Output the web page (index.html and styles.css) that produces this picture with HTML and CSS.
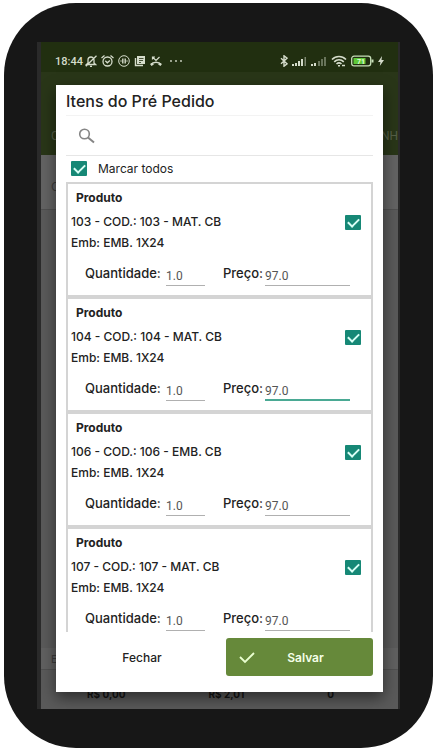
FILE: index.html
```
<!DOCTYPE html>
<html lang="pt-BR">
<head>
    <meta charset="UTF-8">
    <meta name="viewport" content="width=device-width, initial-scale=1.0">
    <title>Itens do Pré Pedido</title>
    <link rel="stylesheet" href="styles.css">
</head>
<body>
    <div class="phone">
        <div class="screen">
            <div class="status-bar">
                <span class="clock">18:44</span>
                <div class="status-left">
                    <svg width="12" height="12" viewBox="0 0 12 12" fill="none" stroke="currentColor" stroke-width="1.300"><path d="M1.500 9.500h9L9 8V5a3 3 0 0 0-6 0v3zM5 11.300h2M11.500.8.8 11.200"/></svg>
                    <svg width="13" height="12" viewBox="0 0 13 12" fill="none" stroke="currentColor" stroke-width="1.300"><circle cx="6.500" cy="6.500" r="4.500"/><path d="M.5 3 3.500.6M12.500 3 9.500.6M4.300 5.800l2 2L8.900 5.500"/></svg>
                    <svg width="12" height="12" viewBox="0 0 12 12" fill="none" stroke="currentColor"><circle cx="6" cy="6" r="5.300"/><path d="M4.800 3.500v5M7.200 3.500v5" stroke-width="1.400"/><path d="M3 5v2M9 5v2" stroke-width=".7"/></svg>
                    <svg width="12" height="12" viewBox="0 0 12 12"><path d="M3 1h8v8H3z" fill="currentColor"/><path d="M1.500 3v7.500H9" fill="none" stroke="currentColor" stroke-width="1.400"/><path d="M5 3.500h4.500M5 5.500h4M5 7.500h2" stroke="#212f10" stroke-width=".8"/></svg>
                    <svg width="12" height="12" viewBox="0 0 12 12" fill="none" stroke="currentColor"><path d="M2.500 4.500V2H5M2.500 2l3.500 3.500L9.500 2" stroke-width="1.200"/><path d="M1 9.500c2.500-3 7.500-3 10 0" stroke-width="1.500"/><path d="M.8 10l2.400-1.500M11.200 10 8.800 8.500" stroke-width="2.500"/></svg>
                    <svg class="dots" width="12" height="12" viewBox="0 0 12 12" fill="currentColor"><circle cx="1" cy="6" r=".9"/><circle cx="6" cy="6" r=".9"/><circle cx="11" cy="6" r=".9"/></svg>
                </div>
                <div class="status-right">
                    <svg width="8" height="12" viewBox="0 0 8 12" fill="none" stroke="currentColor" stroke-width="1.400"><path d="M1 3.200l6 5.600-3 2.400V.8l3 2.400-6 5.600"/></svg>
                    <svg width="15" height="12" viewBox="0 0 15 12" fill="currentColor"><path d="M0 9h2v2H0zM3 8h2v3H3zM6 6h2v5H6zM9 4h2v7H9z"/><path d="M12.500 2H14v9h-1.500z" opacity=".5"/></svg>
                    <svg width="16" height="12" viewBox="0 0 16 12" fill="currentColor"><path d="M0 9h2v2H0zM3 8h2v3H3z"/><path d="M7 6h2v5H7zM10 4h2v7h-2zM13 2h2v9h-2z" opacity=".4"/></svg>
                    <svg width="16" height="12" viewBox="0 0 16 12" fill="none" stroke="currentColor" stroke-width="1.600"><path d="M1 4.500c4-4 10-4 14 0M3.200 6.900c2.800-2.700 6.800-2.700 9.600 0M5.500 9c1.500-1.300 3.500-1.300 5 0"/><path d="M7 10.800h2M11 10.500h3"/></svg>
                    <svg width="23" height="12" viewBox="0 0 23 12"><rect x=".7" y="1.200" width="19" height="9.600" rx="2.400" fill="none" stroke="#c8e0b8" stroke-width="1.300"/><path d="M2.500 3h12v6h-12z" fill="#5fc938"/><path d="M20.500 4.500h2v3h-2z" fill="#c8e0b8"/><text x="6" y="9" class="battery-level">71</text></svg>
                    <svg width="6" height="12" viewBox="0 0 6 12" fill="currentColor"><path d="M4 1 0 7h2.400L1.800 11 6 5H3.500z"/></svg>
                </div>
            </div>
            <div class="tabs">
                <span>C</span>
                <span>NH</span>
            </div>
            <div class="filter">C</div>
            <div class="totals-head">E</div>
            <div class="totals">
                <b>R$ 0,00</b>
                <b>R$ 2,01</b>
                <b>0</b>
            </div>

            <form class="modal">
                <h1>Itens do Pré Pedido</h1>
                <div class="search">
                    <svg width="18" height="18" viewBox="0 0 18 18" fill="none" stroke="#858585" stroke-width="1.600"><circle cx="6.500" cy="7" r="4.800"/><path d="M10 10.500l6 5" stroke-width="2"/></svg>
                    <input type="text" aria-label="Pesquisar">
                </div>
                <div class="mark-all">
                    <input type="checkbox" id="todos" class="check" checked>
                    <label for="todos">Marcar todos</label>
                </div>

                <div class="list">
                    <div class="card">
                        <h2>Produto</h2>
                        <div class="item">
                            <label for="item103">103 - COD.: 103 - MAT. CB</label>
                            <input type="checkbox" id="item103" class="check" checked>
                        </div>
                        <p>Emb: EMB. 1X24</p>
                        <div class="fields">
                            <label for="qtd103">Quantidade:</label>
                            <input type="text" id="qtd103" class="qty" value="1.0">
                            <label for="preco103">Preço:</label>
                            <input type="text" id="preco103" class="price" value="97.0">
                        </div>
                    </div>
                    <div class="card">
                        <h2>Produto</h2>
                        <div class="item">
                            <label for="item104">104 - COD.: 104 - MAT. CB</label>
                            <input type="checkbox" id="item104" class="check" checked>
                        </div>
                        <p>Emb: EMB. 1X24</p>
                        <div class="fields">
                            <label for="qtd104">Quantidade:</label>
                            <input type="text" id="qtd104" class="qty" value="1.0">
                            <label for="preco104">Preço:</label>
                            <input type="text" id="preco104" class="price active" value="97.0">
                        </div>
                    </div>
                    <div class="card">
                        <h2>Produto</h2>
                        <div class="item">
                            <label for="item106">106 - COD.: 106 - EMB. CB</label>
                            <input type="checkbox" id="item106" class="check" checked>
                        </div>
                        <p>Emb: EMB. 1X24</p>
                        <div class="fields">
                            <label for="qtd106">Quantidade:</label>
                            <input type="text" id="qtd106" class="qty" value="1.0">
                            <label for="preco106">Preço:</label>
                            <input type="text" id="preco106" class="price" value="97.0">
                        </div>
                    </div>
                    <div class="card">
                        <h2>Produto</h2>
                        <div class="item">
                            <label for="item107">107 - COD.: 107 - MAT. CB</label>
                            <input type="checkbox" id="item107" class="check" checked>
                        </div>
                        <p>Emb: EMB. 1X24</p>
                        <div class="fields">
                            <label for="qtd107">Quantidade:</label>
                            <input type="text" id="qtd107" class="qty" value="1.0">
                            <label for="preco107">Preço:</label>
                            <input type="text" id="preco107" class="price" value="97.0">
                        </div>
                    </div>
                </div>

                <div class="actions">
                    <button type="button" class="close">Fechar</button>
                    <button type="button" class="save">
                        <svg width="18" height="14" viewBox="0 0 18 14" fill="none" stroke="#e9ffd0" stroke-width="1.800"><path d="M2 7l5 5 9-9"/></svg>
                        <span>Salvar</span>
                    </button>
                </div>
            </form>
        </div>
    </div>
</body>
</html>
```

FILE: styles.css
```
* {
    box-sizing: border-box;
}

body {
    margin: 0;
    padding: 3px 5px 2px 4px;
    background-color: #fff;
    font-family: Inter, sans-serif;
    color: #222;
}

.phone {
    height: calc(100vh - 5px);
    padding: 39px 33px;
    border-radius: 72px;
    background-color: #171717;
}

.screen {
    position: relative;
    display: flex;
    flex-direction: column;
    height: 100%;
    border-left: 4px solid #2a2a2a;
    border-right: 2px solid #2a2a2a;
    background-color: #5a5a5a;
    overflow: hidden;
}

.status-bar {
    display: flex;
    align-items: center;
    height: 30px;
    padding: 8px 14px 0;
    background-color: #212f10;
    color: #d5dccb;
}

.status-bar svg {
    display: block;
}

.clock {
    width: 30px;
    font: 500 11px Roboto, sans-serif;
}

.status-left {
    display: flex;
    gap: 4px;
}

.dots {
    margin-left: 4px;
}

.status-right {
    display: flex;
    gap: 4px;
    margin-left: auto;
}

.battery-level {
    font: bold 7px Roboto, sans-serif;
    fill: #e4ffd8;
}

.tabs {
    display: flex;
    justify-content: space-between;
    align-items: flex-end;
    height: 83px;
    padding: 0 0 12px 10px;
    background-color: #293618;
    color: #566048;
    font: 12px Roboto, sans-serif;
}

.filter {
    height: 55px;
    padding: 24px 10px 0;
    border-bottom: 1px solid #505050;
    background-color: #636363;
    color: #3c3c3c;
    font-size: 12px;
}

.totals-head {
    height: 22px;
    margin-top: auto;
    padding: 4px 10px;
    border-bottom: 1px solid #505050;
    background-color: #606060;
    color: #3c3c3c;
    font-size: 11px;
}

.totals {
    display: flex;
    justify-content: space-between;
    height: 39px;
    padding: 17px 64px 0 46px;
    color: #151515;
    font-size: 10px;
    line-height: 15px;
}

.modal {
    position: absolute;
    inset: 43px 15px 17px;
    display: flex;
    flex-direction: column;
    padding: 0 10px 16px;
    background-color: #fff;
    box-shadow: 0 6px 14px rgba(0, 0, 0, 0.5);
}

h1 {
    margin: 0;
    height: 31px;
    border-bottom: 1px solid #f3f3f3;
    font-size: 16px;
    font-weight: 500;
    line-height: 32px;
}

.search {
    display: flex;
    align-items: center;
    height: 40px;
    padding-left: 12px;
    border-bottom: 1px solid #e6e6e6;
}

.search input {
    flex: 1;
    min-width: 0;
    margin-left: 8px;
    border: none;
    outline: none;
    font: 14px Roboto, sans-serif;
}

.mark-all {
    display: flex;
    align-items: center;
    gap: 11px;
    height: 26px;
    padding: 0 0 2px 5px;
    font-size: 12px;
}

.check {
    appearance: none;
    display: flex;
    justify-content: center;
    width: 16px;
    height: 15px;
    margin: 0;
    border-radius: 1px;
    background-color: #168876;
}

.check:checked::after {
    content: "";
    width: 5px;
    height: 9px;
    margin-top: 1px;
    border: solid #d9fff6;
    border-width: 0 2px 2px 0;
    transform: rotate(45deg);
}

.list {
    flex: 1;
    min-height: 0;
    overflow: hidden;
}

.card {
    height: 115px;
    padding: 5px 10px 0 3px;
    border: 2px solid #d4d4d4;
    font-size: 12px;
    font-weight: 500;
    line-height: 18px;
}

h2 {
    margin: 0 0 6px;
    padding-left: 5px;
    font-size: 12px;
    font-weight: 700;
}

.item {
    display: flex;
    justify-content: space-between;
    align-items: center;
}

.card p {
    margin: 3px 0 10px;
}

.fields {
    display: flex;
    padding-left: 14px;
    font-size: 13px;
    font-weight: 500;
}

.fields label {
    width: 81px;
    padding-top: 2px;
}

.fields input {
    height: 24px;
    padding: 4px 0 0;
    border: none;
    border-bottom: 1px solid #b0b0b0;
    border-radius: 0;
    outline: none;
    color: #555;
    font: 12px Roboto, sans-serif;
}

.fields .qty {
    width: 39px;
    margin-right: 18px;
}

.fields .qty + label {
    width: 42px;
}

.fields .price {
    flex: 1;
    min-width: 0;
    margin-right: 11px;
}

.fields .active {
    padding-top: 5px;
    border-bottom: 2px solid #4aa994;
}

.actions {
    display: flex;
    gap: 8px;
    padding-top: 6px;
}

button {
    height: 38px;
    padding: 0;
    border: none;
    border-radius: 3px;
    font: 500 12px Inter, sans-serif;
    cursor: pointer;
}

.close {
    flex: 1;
    background-color: #fff;
    color: #222;
}

.save {
    display: flex;
    align-items: center;
    width: 147px;
    padding: 0 18px 0 12px;
    background-color: #66893a;
    color: #f4ffe8;
    font-weight: 600;
}

.save span {
    flex: 1;
    text-align: center;
}
```
